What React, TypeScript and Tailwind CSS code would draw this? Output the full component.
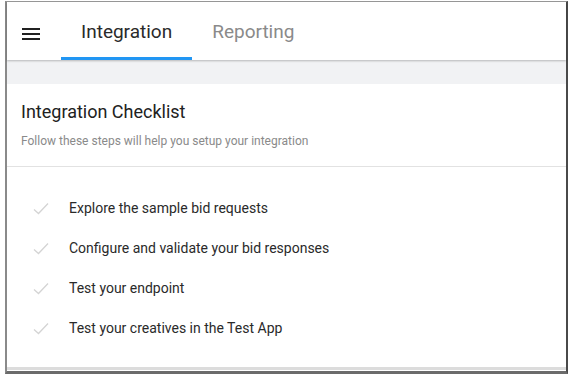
const steps = [
  'Explore the sample bid requests',
  'Configure and validate your bid responses',
  'Test your endpoint',
  'Test your creatives in the Test App',
];

function MenuIcon() {
  return (
    <svg width="18" height="12" viewBox="0 0 18 12" className="text-[#212121]">
      <rect x="0" y="0" width="18" height="2" fill="currentColor" />
      <rect x="0" y="5" width="18" height="2" fill="currentColor" />
      <rect x="0" y="10" width="18" height="2" fill="currentColor" />
    </svg>
  );
}

function CheckIcon() {
  return (
    <svg width="16" height="13" viewBox="0 0 16 13" fill="none">
      <path d="M1 7.5 L5.5 11.5 L15 1.5" stroke="#d4d4d4" strokeWidth="1.3" />
    </svg>
  );
}

export default function App() {
  return (
    <div className="w-[569px] h-[374px] bg-white pl-[5px] pt-[1px] pr-px font-['Roboto',sans-serif]">
      <div className="h-full flex flex-col border-l-2 border-t border-r-2 border-l-[#8a8a8a] border-t-[#999] border-r-[#4a4a4a] border-b-[3px] border-b-[#6b6b6b]">
        <div className="h-[58px] flex items-stretch bg-white shadow-[0_1px_2px_rgba(0,0,0,0.25)] relative z-10">
          <div className="w-[54px] flex items-center pl-[15px] pt-[5px]">
            <MenuIcon />
          </div>
          <div className="flex items-stretch">
            <div className="px-[20px] flex items-center border-b-[3px] border-[#2196f3] text-[19px] text-[#2a2a2a] pt-[6px]">
              Integration
            </div>
            <div className="px-[20px] flex items-center border-b-[3px] border-transparent text-[19px] text-[#8a8a8a] pt-[6px]">
              Reporting
            </div>
          </div>
        </div>
        <div className="h-[24px] bg-[#f1f2f4]" />
        <div className="flex-1 bg-white flex flex-col">
          <div className="px-[14px] pt-[16px] pb-[17px] border-b border-[#e2e2e2]">
            <h1 className="text-[18px] text-[#212121] leading-[24px]">Integration Checklist</h1>
            <p className="text-[12px] text-[#8a8a8a] mt-[9px] leading-[16px]">
              Follow these steps will help you setup your integration
            </p>
          </div>
          <ul className="pt-[21px] flex flex-col">
            {steps.map((s) => (
              <li key={s} className="h-[40px] flex items-center pl-[26px]">
                <CheckIcon />
                <span className="ml-[20px] text-[14px] text-[#2a2a2a]">{s}</span>
              </li>
            ))}
          </ul>
          <div className="mt-auto h-[3px] bg-[#dcdcdc] mb-[1px]" />
        </div>
      </div>
    </div>
  );
}
